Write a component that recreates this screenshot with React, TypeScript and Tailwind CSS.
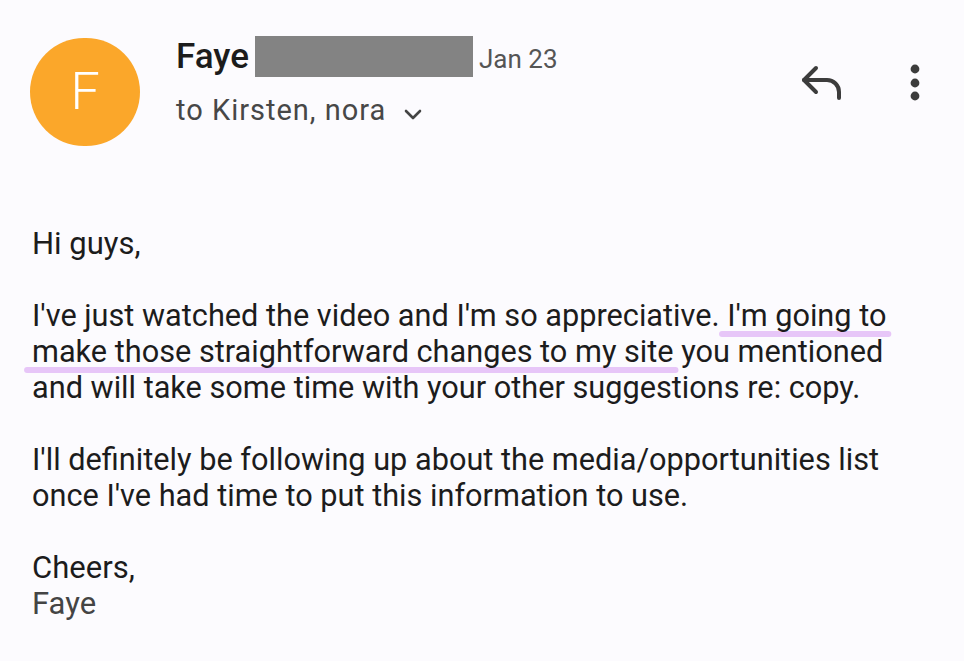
import React from 'react';

const Mark: React.FC<{ children: React.ReactNode }> = ({ children }) => (
    <span className="relative">
        <span className="absolute left-[-8px] right-[-5px] bottom-[-3px] h-[6px] rounded-full bg-[#e7c6f8]" />
        <span className="relative">{children}</span>
    </span>
);

export default function App() {
    return (
        <div className="w-[964px] h-[661px] overflow-hidden bg-[#fcfbfe] text-[#1c1c1c]" style={{ fontFamily: 'Roboto, "Noto Sans", sans-serif' }}>
            {/* Header */}
            <div className="flex items-start pt-[38px] pl-[30px] pr-[43px]">
                <div className="w-[110px] h-[108px] rounded-full bg-[#fba72a] flex items-center justify-center shrink-0">
                    <span className="text-white text-[52px] font-light leading-none">F</span>
                </div>
                <div className="ml-[36px] flex flex-col">
                    <div className="flex items-baseline h-[41px] mt-[-2px]">
                        <span className="text-[35px] font-medium text-[#1c1c1c] leading-[41px]">Faye</span>
                        <span className="self-start ml-[6px] w-[218px] h-[41px] bg-[#838383]" />
                        <span className="ml-[6px] text-[26px] text-[#555] leading-[41px]">Jan 23</span>
                    </div>
                    <div className="flex items-start mt-[15px]">
                        <span className="text-[29px] tracking-[1px] text-[#474747] leading-[36px]">to Kirsten, nora</span>
                        <svg className="ml-[18px] mt-[17px]" width="18" height="11" viewBox="0 0 18 11" fill="none" stroke="#444" strokeWidth="2.6" strokeLinecap="round" strokeLinejoin="round">
                            <path d="M2 2l7 7 7-7" />
                        </svg>
                    </div>
                </div>
                <div className="ml-auto flex items-start mt-[24px]">
                    <svg width="48" height="40" viewBox="0 0 48 40" fill="none" stroke="#3c3c3c" strokeWidth="4" strokeLinecap="round" strokeLinejoin="round">
                        <path d="M18 6L6 18l12 12" />
                        <path d="M6 18h23a12 12 0 0 1 12 12v6" />
                    </svg>
                    <svg className="ml-[63px]" width="12" height="40" viewBox="0 0 12 40" fill="#3c3c3c">
                        <circle cx="6" cy="7" r="4.4" />
                        <circle cx="6" cy="21" r="4.4" />
                        <circle cx="6" cy="34" r="4.4" />
                    </svg>
                </div>
            </div>

            {/* Body */}
            <div className="pl-[32px] mt-[80px] text-[31px] leading-[36px]">
                <div>Hi guys,</div>
                <div className="h-[36px]" />
                <div className="origin-left scale-x-[0.99] whitespace-nowrap">
                    <div>I've just watched the video and I'm so appreciative. <Mark>I'm going to</Mark></div>
                    <div><Mark>make those straightforward changes to my site</Mark> you mentioned</div>
                    <div>and will take some time with your other suggestions re: copy.</div>
                    <div className="h-[36px]" />
                    <div>I'll definitely be following up about the media/opportunities list</div>
                    <div>once I've had time to put this information to use.</div>
                </div>
                <div className="h-[36px]" />
                <div>Cheers,</div>
                <div className="text-[#444]">Faye</div>
            </div>
        </div>
    );
}
